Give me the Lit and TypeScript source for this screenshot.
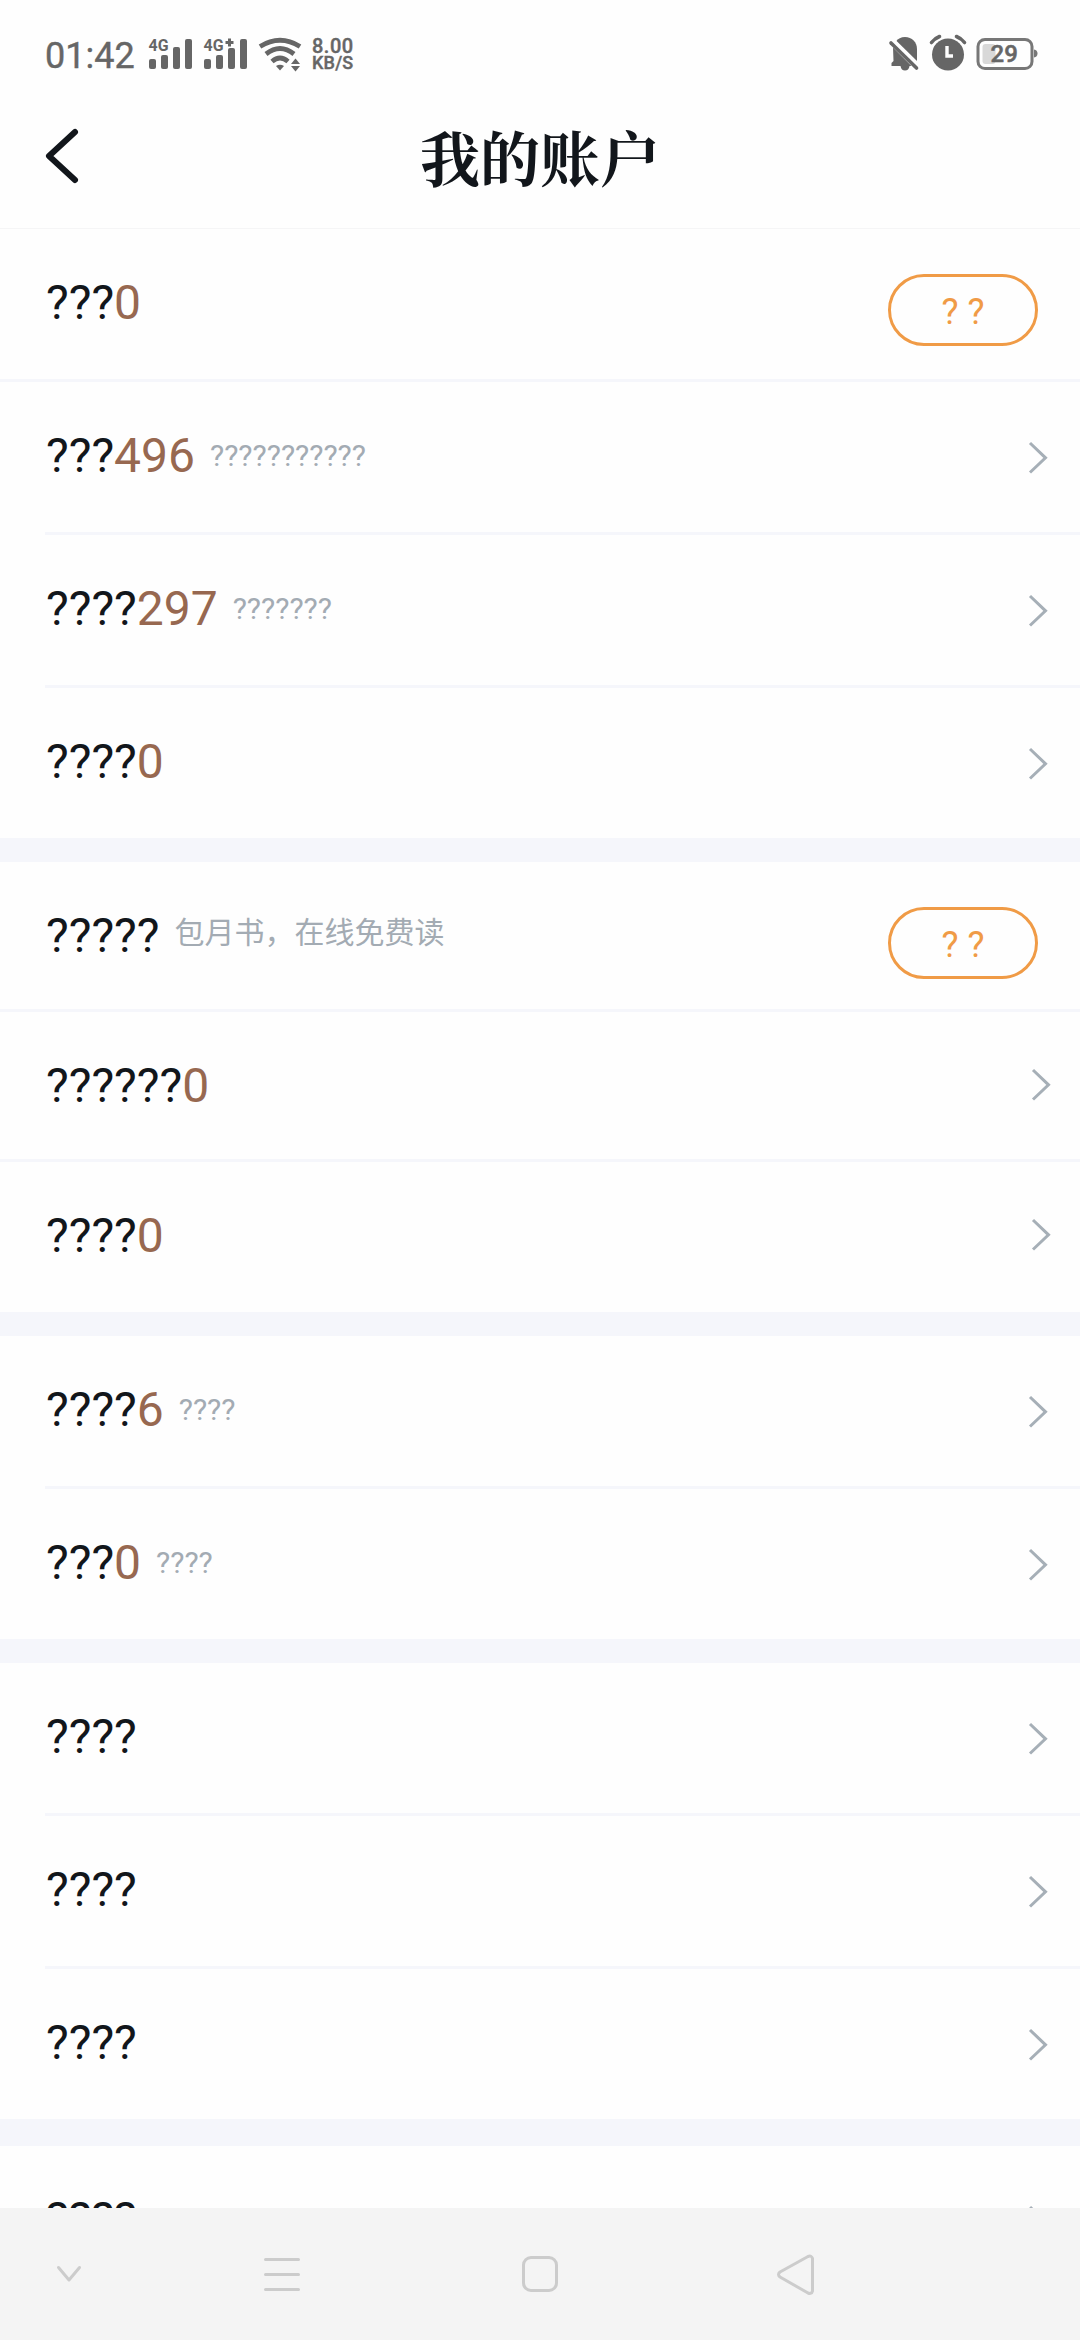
import { LitElement, html, css, svg, nothing } from "lit";
import { customElement, property } from "lit/decorators.js";

type Row = {
  label: string;
  value?: string;
  hint?: string;
  hintCjk?: boolean;
  action?: string;
  divider?: "full" | "inset";
};
type Group = { compact?: boolean; wideGap?: boolean; rows: Row[] };

const GROUPS: Group[] = [
  {
    rows: [
      { label: "???", value: "0", action: "? ?", divider: "full" },
      { label: "???", value: "496", hint: "???????????", divider: "inset" },
      { label: "????", value: "297", hint: "???????", divider: "inset" },
      { label: "????", value: "0" },
    ],
  },
  {
    compact: true,
    rows: [
      { label: "?????", hint: "包月书，在线免费读", hintCjk: true, action: "? ?", divider: "full" },
      { label: "??????", value: "0", divider: "full" },
      { label: "????", value: "0" },
    ],
  },
  {
    rows: [
      { label: "????", value: "6", hint: "????", divider: "inset" },
      { label: "???", value: "0", hint: "????" },
    ],
  },
  {
    wideGap: true,
    rows: [
      { label: "????", divider: "inset" },
      { label: "????", divider: "inset" },
      { label: "????" },
    ],
  },
  { rows: [{ label: "????" }] },
];

@customElement("status-bar")
class StatusBar extends LitElement {
  static styles = css`
    :host {
      display: flex;
      height: 108px;
      flex: none;
      align-items: flex-start;
      padding: 30px 42px 0 45px;
      box-sizing: border-box;
      color: #666;
      font-family: Roboto, sans-serif;
    }
    .time {
      font-size: 36px;
      line-height: 42px;
      padding-top: 5px;
      width: 102px;
      -webkit-text-stroke: 0.4px #666;
    }
    .signal { width: 48px; margin-right: 7px; }
    svg { display: block; height: 45px; flex: none; fill: #666; }
    .wifi { width: 46px; }
    .signal text { font: 700 17px Roboto, sans-serif; }
    .speed {
      display: flex;
      flex-direction: column;
      margin-left: 9px;
      padding-top: 8px;
      font-weight: 500;
      -webkit-text-stroke: 0.4px #666;
    }
    .rate { font-size: 20px; line-height: 16px; letter-spacing: 0.5px; }
    .unit { font-size: 18px; line-height: 17px; letter-spacing: 0.2px; }
    .spacer { flex: 1; }
    .bell { width: 34px; }
    .alarm { width: 40px; margin: 0 6px 0 7px; }
    .battery { width: 64px; }
    .battery text { font: 500 24px Roboto, sans-serif; stroke: #666; stroke-width: 0.5; }
  `;

  private signal(plus: boolean) {
    return svg`
      <rect x="1" y="29" width="7" height="10" rx="2"/>
      <rect x="13" y="25" width="7" height="14" rx="2"/>
      <rect x="25" y=${plus ? 18 : 17} width="7" height=${plus ? 21 : 22} rx="2"/>
      <rect x="37" y="9" width="7" height="30" rx="2"/>
      <text x="0.5" y="21" textLength="20" lengthAdjust="spacingAndGlyphs">4G</text>
      ${plus ? svg`<path d="M25 8.500h3v2.500h2.500v3h-2.500v2.500h-3v-2.500h-2.500v-3h2.500z"/>` : nothing}`;
  }

  render() {
    return html`
      <div class="time">01:42</div>
      <svg class="signal" viewBox="-1 0 48 45">${this.signal(false)}</svg>
      <svg class="signal" viewBox="-1 0 48 45">${this.signal(true)}</svg>
      <svg class="wifi" viewBox="-1 0 46 45">
        <g fill="none" stroke="#666" stroke-width="4.800">
          <path d="M2 16.500Q22 4 42 16.500"/>
          <path d="M8 24Q22 13 36 24"/>
          <path d="M14 31.500Q22 24.500 30 31.500"/>
        </g>
        <path d="M18 36Q22 33.500 26 36L22 40.500z"/>
        <path d="M33 34L37.500 28.500L42 34z"/>
        <path d="M33 36L37.500 41.500L42 36z"/>
      </svg>
      <div class="speed"><span class="rate">8.00</span><span class="unit">KB/S</span></div>
      <div class="spacer"></div>
      <svg class="bell" viewBox="0 0 34 45">
        <path d="M9 11.500C11 8.500 14 7 18 7c7 0 12 5 12 12v14z"/>
        <path d="M6 17.500L24.500 36H4.500v-3l2-2z"/>
        <path d="M13.500 36h9c-.5 3-2 4.500-4.500 4.500s-4-1.500-4.500-4.500z"/>
        <path d="M4 13L29.500 38" fill="none" stroke="#666" stroke-width="3.600" stroke-linecap="round"/>
        <path d="M7 10.500L32 35" fill="none" stroke="#fefefe" stroke-width="3"/>
      </svg>
      <svg class="alarm" viewBox="0 0 40 45">
        <circle cx="20" cy="24.500" r="16"/>
        <g fill="none" stroke="#666" stroke-width="3.600" stroke-linecap="round">
          <path d="M3.500 12.500Q6.500 8.500 11.500 6.500"/>
          <path d="M36.500 12.500Q33.500 8.500 28.500 6.500"/>
        </g>
        <path d="M19 16v10h6" fill="none" stroke="#fefefe" stroke-width="3.400"/>
      </svg>
      <svg class="battery" viewBox="-1 0 64 45">
        <rect x="3" y="9.500" width="54" height="29" rx="7" fill="none" stroke="#777" stroke-width="3"/>
        <path d="M59 19.500q3.500 .5 3.500 4t-3.500 4z" fill="#777"/>
        <rect x="7.500" y="14" width="13" height="20" rx="3" fill="#d8d8d8"/>
        <text x="15.500" y="32">29</text>
      </svg>
    `;
  }
}

@customElement("account-row")
class AccountRow extends LitElement {
  @property({ attribute: false }) row!: Row;
  @property({ type: Boolean }) compact = false;

  static styles = css`
    :host { display: block; }
    .row {
      display: flex;
      align-items: flex-start;
      height: 150px;
      padding-left: 46px;
      box-sizing: border-box;
      font-family: Roboto, "Noto Sans CJK SC", sans-serif;
    }
    .compact { height: 147px; }
    .tall { height: 150px; }
    .text { display: flex; flex: 1; padding-top: 46px; }
    .label, .value { font-size: 48px; line-height: 56px; }
    .label { color: #12161b; }
    .value { color: #976850; }
    .hint {
      margin: 10px 0 0 15px;
      font-size: 30px;
      line-height: 36px;
      color: #a3abb3;
    }
    .cjk { margin-top: 4px; font-family: "Noto Sans CJK SC", sans-serif; }
    .action {
      width: 150px;
      height: 72px;
      margin: 45px 42px 0 0;
      padding: 4px 0 0;
      box-sizing: border-box;
      border: 3px solid #f09b46;
      border-radius: 36px;
      background: none;
      color: #f09b46;
      font: 36px/42px Roboto, sans-serif;
    }
    .arrow {
      width: 20px;
      height: 34px;
      margin: 59px 32px 0 0;
      fill: none;
      stroke: #a6afb7;
      stroke-width: 3;
    }
    .compact .arrow { margin: 56px 29px 0 0; }
    .line { height: 3px; background: #f5f6fb; }
    .inset { margin-left: 45px; }
  `;

  render() {
    const { label, value, hint, hintCjk, action, divider } = this.row;
    return html`
      <div class="row ${this.compact ? "compact" : ""} ${divider ? "" : "tall"}">
        <div class="text">
          <span class="label">${label}</span>
          ${value ? html`<span class="value">${value}</span>` : nothing}
          ${hint ? html`<span class="hint ${hintCjk ? "cjk" : ""}">${hint}</span>` : nothing}
        </div>
        ${action
          ? html`<button class="action">${action}</button>`
          : html`<svg class="arrow" viewBox="0 0 20 34"><path d="M2 2L17.500 16.800L2 31.500"/></svg>`}
      </div>
      ${divider ? html`<div class="line ${divider}"></div>` : nothing}
    `;
  }
}

@customElement("app-root")
class AppRoot extends LitElement {
  static styles = css`
    :host {
      display: flex;
      flex-direction: column;
      width: 1080px;
      height: 2340px;
      overflow: hidden;
      background: #fefefe;
    }
    .header {
      display: grid;
      grid-template-columns: 120px 1fr 120px;
      flex: none;
      height: 121px;
      box-sizing: border-box;
      border-bottom: 1px solid #f5f5f6;
    }
    .back {
      width: 40px;
      height: 60px;
      margin: 18px 0 0 42px;
      fill: none;
      stroke: #12161b;
      stroke-width: 6;
      stroke-linecap: round;
      stroke-linejoin: round;
    }
    .title {
      margin: 12px 0 0;
      text-align: center;
      color: #12161b;
      font: 700 60px/72px "Noto Serif CJK SC", "Noto Serif SC", "Source Han Serif SC", "Noto Sans CJK SC", serif;
    }
    .list { flex: 1; min-height: 0; overflow: hidden; }
    .group { border-bottom: 24px solid #f5f6fb; }
    .wide { border-bottom-width: 27px; }
    .nav {
      display: grid;
      grid-template-columns: 138px 288px 228px 284px;
      justify-items: center;
      align-items: center;
      flex: none;
      height: 132px;
      background: #f4f4f4;
    }
    .nav svg {
      display: block;
      width: 44px;
      height: 44px;
      fill: none;
      stroke: #ccc;
      stroke-width: 3;
      stroke-linecap: round;
      stroke-linejoin: round;
    }
  `;

  render() {
    return html`
      <status-bar></status-bar>
      <header class="header">
        <svg class="back" viewBox="0 0 40 60"><path d="M33 6L7 30L33 54"/></svg>
        <h1 class="title">我的账户</h1>
      </header>
      <main class="list">
        ${GROUPS.map(
          (group) => html`<section class="group ${group.wideGap ? "wide" : ""}">
            ${group.rows.map(
              (row) => html`<account-row .row=${row} ?compact=${group.compact ?? false}></account-row>`
            )}
          </section>`
        )}
      </main>
      <nav class="nav">
        <svg viewBox="0 0 44 44"><path d="M11.500 15.500L22 28L32.500 15.500"/></svg>
        <svg viewBox="0 0 44 44"><path d="M5.500 7.500h33M5.500 22.500h33M5.500 37.500h33"/></svg>
        <svg viewBox="0 0 44 44"><rect x="5.500" y="5.500" width="33" height="33" rx="7.500"/></svg>
        <svg viewBox="0 0 44 44"><path d="M34 4.500L6 20Q3 22.500 6 25L34 41Q37.500 42.500 38.500 39V6.500Q37.500 3 34 4.500z"/></svg>
      </nav>
    `;
  }
}
